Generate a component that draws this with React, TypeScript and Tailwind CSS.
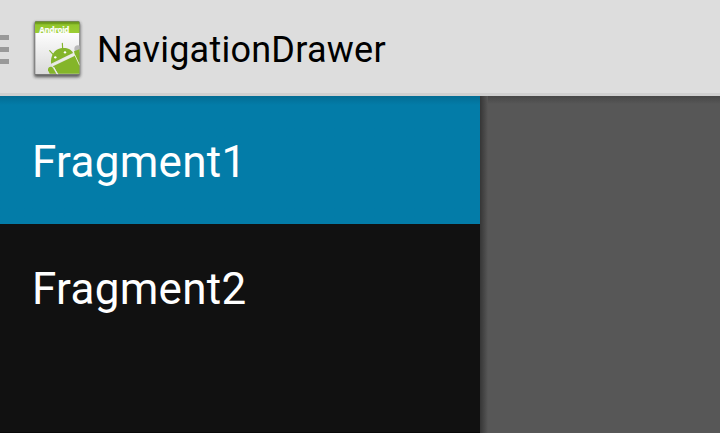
function AppIcon() {
  return (
    <svg className="-mt-px ml-[19px] h-[66px] w-[60px] shrink-0" viewBox="84 18 180 198" aria-label="Android">
      <defs>
        <linearGradient id="paper" x1="0" y1="0" x2="0" y2="1">
          <stop offset="0" stopColor="#fdfdfd" />
          <stop offset="1" stopColor="#dadada" />
        </linearGradient>
        <linearGradient id="band" x1="0" y1="0" x2="0" y2="1">
          <stop offset="0" stopColor="#64901a" />
          <stop offset="0.2" stopColor="#74a31f" />
          <stop offset="0.3" stopColor="#92c62c" />
          <stop offset="1" stopColor="#9bcd33" />
        </linearGradient>
        <clipPath id="card">
          <rect x="105" y="34" width="134" height="160" rx="4" />
        </clipPath>
        <clipPath id="top">
          <rect x="105" y="34" width="134" height="35" />
        </clipPath>
        <filter id="soft" x="-20%" y="-20%" width="140%" height="140%">
          <feGaussianBlur stdDeviation="4" />
        </filter>
      </defs>
      <rect x="102" y="37" width="139" height="165" rx="7" fill="#222" opacity="0.7" filter="url(#soft)" />
      <rect x="104" y="34" width="135" height="161" rx="4" fill="#777" />
      <g clipPath="url(#card)">
        <rect x="106" y="68" width="132" height="124" fill="url(#paper)" />
        <rect x="105" y="34" width="134" height="35" fill="url(#band)" />
        <g clipPath="url(#top)">
          <text x="118" y="70" fontSize="24" fontWeight="700" textLength="90" fill="#fff" stroke="#fff" strokeWidth="0.7" fontFamily="'Open Sans', sans-serif">
            Android
          </text>
        </g>
        <circle cx="234" cy="117" r="11" fill="#b9b9b9" />
        <path d="M222 124 L239 118 V191 H174 L159 169 L225 137Z" fill="#84b52a" />
        <path d="M153 161 C151 137 163 119 182 115 C200 112 214 118 219 129Z" fill="#84b52a" />
        <path d="M157 165 L224 133" stroke="#eef4e2" strokeWidth="3" />
        <path d="M224 134 L239 166" stroke="#e3edcf" strokeWidth="3" />
        <path d="M144 181 C142 172 153 166 159 174 L169 191 H149Z" fill="#84b52a" />
        <path d="M161 171 L173 193" stroke="#eee" strokeWidth="3" />
        <path d="M149 122 L160 134 M187 100 L188 116" stroke="#84b52a" strokeWidth="3.5" strokeLinecap="round" />
        <circle cx="166" cy="142" r="3.5" fill="#fff" />
        <circle cx="195" cy="127" r="3.5" fill="#fff" />
      </g>
    </svg>
  );
}

export default function App() {
  return (
    <div className="flex h-[433px] w-[720px] flex-col overflow-hidden bg-[#575757] font-['Roboto',sans-serif]">
      <header className="flex h-24 shrink-0 items-center border-b-3 border-[#cfcfcf] bg-[#dddddd] pt-[6px]">
        <div className="flex w-[9px] flex-col gap-[7px]">
          <div className="h-[5px] bg-[#999]" />
          <div className="h-[5px] bg-[#999]" />
          <div className="h-[5px] bg-[#999]" />
        </div>
        <AppIcon />
        <h1 className="ml-[9px] text-[36px] leading-none tracking-[0.24px] text-black">NavigationDrawer</h1>
      </header>
      <div className="flex grow">
        <nav className="w-[480px] border-b border-[#080808] bg-[#111] text-[44px] tracking-[0.3px] text-white">
          <div className="flex h-32 items-center bg-[#037ca8] bg-linear-to-b from-[#036c93] to-[#037ca8] to-7% pl-8 pt-[3px]">
            Fragment1
          </div>
          <div className="flex h-[127px] items-center pl-8 pt-[3px]">Fragment2</div>
        </nav>
        <div className="w-[8px] bg-linear-to-r from-[#363636] to-[#575757]" />
        <div className="h-2 grow bg-linear-to-b from-[#464646] to-[#575757]" />
      </div>
    </div>
  );
}
